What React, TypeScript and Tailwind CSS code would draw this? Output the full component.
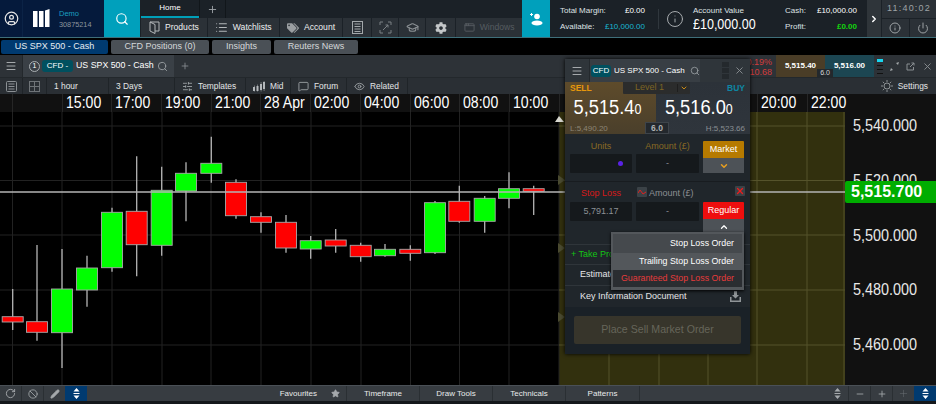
import {
  Ban,
  ChevronDown,
  ChevronRight,
  ChevronUp,
  CircleUser,
  Eye,
  GraduationCap,
  Info,
  List,
  Menu,
  MessageSquare,
  Minus,
  Pencil,
  Plus,
  Power,
  RotateCw,
  Search,
  SlidersHorizontal,
  Star,
  X,
  AppWindow,
} from "lucide-react"
import { FaCog, FaTags } from "react-icons/fa"

// x, wick top, wick bottom, body top, body bottom, up?
const candles: [number, number, number, number, number, boolean][] = [
  [12.7, 289, 330, 316.7, 322, false],
  [37, 245, 340.7, 321.7, 332.3, false],
  [62, 249, 368, 289, 332.7, true],
  [87, 255.7, 306.7, 268, 290, true],
  [112, 207.7, 271.7, 212.3, 267.7, true],
  [136.7, 156.3, 276.3, 211.3, 244.7, false],
  [161.7, 166.7, 255.7, 190.3, 245.3, true],
  [186, 162.3, 221.3, 173.3, 191, true],
  [211.3, 136.7, 182.7, 163.3, 173.3, true],
  [236, 179.3, 218.7, 182.3, 215.7, false],
  [261, 212.3, 232.7, 216.7, 222.3, false],
  [286, 215, 252.7, 222.3, 248, false],
  [310.7, 236, 258.7, 240.7, 249, true],
  [335.7, 229, 252.7, 240, 246, false],
  [360.7, 242.7, 261.7, 245.3, 256.7, false],
  [385, 244, 256.7, 249.3, 255.7, true],
  [410.3, 245.3, 260.7, 249.3, 253.3, false],
  [435, 201, 254, 202.7, 252.7, true],
  [459.3, 185.7, 222.7, 201.3, 221.3, false],
  [484.7, 196, 232.7, 198.3, 221.3, true],
  [509, 172.3, 208.3, 188.7, 198.3, true],
  [533.7, 185.7, 215, 188.7, 191.3, false],
]

const gridX = [12.5, 62, 112, 162, 211, 261, 311, 361, 410.5, 459.5, 509, 559, 609, 659, 708, 757, 807]
const gridY = [126, 180.5, 235, 290, 345]
// the labels between 10:00 and 20:00 sit behind the deal ticket
const timeLabels = ["", "15:00", "17:00", "19:00", "21:00", "28 Apr", "02:00", "04:00", "06:00", "08:00", "10:00", "", "", "", "", "20:00", "22:00"]

function Logo() {
  return (
    <svg width="17" height="19" viewBox="0 0 17 19" fill="#fff">
      <path d="M0 2h4.5v16H0zM6 2h4.5v16H6zM12 1.5l4.5-1.5v18H12z" />
    </svg>
  )
}

function BookIcon() {
  return (
    <svg width="11" height="13" viewBox="0 0 11 13" fill="none" stroke="#b4b8bb" strokeWidth="1">
      <path d="M1 1h9v9M1 1v9l5 2.5V3.5zM6 10h4" />
    </svg>
  )
}

function ExpandIcon() {
  return (
    <svg width="13" height="13" viewBox="0 0 13 13" fill="none" stroke="#7b8084" strokeWidth="1">
      <path d="M1 4V1h3M9 1h3v3M12 9v3H9M4 12H1V9" />
      <path d="M4 9l5-5M6.5 4H9v2.5" />
    </svg>
  )
}

function NewsIcon({ color = "#a3a8ab" }: { color?: string }) {
  return (
    <svg width="11" height="13" viewBox="0 0 11 13" fill="none" stroke={color} strokeWidth="1">
      <rect x="0.5" y="0.5" width="10" height="12" />
      <path d="M2.5 3h6M2.5 5.500h6M2.500 8h6M2.500 10.500h6" />
    </svg>
  )
}

function PanesIcon() {
  return (
    <svg width="11" height="11" viewBox="0 0 11 11" fill="none" stroke="#6f7478" strokeWidth="1">
      <rect x="0.5" y="0.5" width="10" height="10" />
      <path d="M5.500 0.500v10M0.500 5.500h10" />
    </svg>
  )
}

function ListBoxIcon() {
  return (
    <svg width="11" height="11" viewBox="0 0 11 11" fill="none" stroke="#8b9094" strokeWidth="1">
      <rect x="0.5" y="0.5" width="10" height="10" rx="1" />
      <path d="M2.500 3h6M2.500 5.500h6M2.500 8h6" />
    </svg>
  )
}

function CandlesIcon() {
  return (
    <svg width="12" height="11" viewBox="0 0 12 11" fill="#b4b8bb">
      <path d="M0 6h2v4H0zM3.500 5h2v5h-2zM7 3h2v6H7zM10 1h2v7h-2z" />
      <path d="M1 4.500h.5v6H1zM4.300 3.500h.5v7h-.5zM7.800 1h.5v9.500h-.5zM10.800 0h.5v10h-.5z" />
    </svg>
  )
}

function SunGear() {
  return (
    <svg width="12" height="12" viewBox="0 0 12 12" fill="none" stroke="#a5a9ac" strokeWidth="0.8">
      <circle cx="6" cy="6" r="3" />
      <path d="M6 0v2M6 10v2M0 6h2M10 6h2M1.800 1.800l1.400 1.400M8.800 8.800l1.400 1.400M1.800 10.200l1.400-1.400M8.800 3.200l1.400-1.400" />
    </svg>
  )
}

function UpDown({ color = "#fff" }: { color?: string }) {
  return (
    <svg width="9" height="11" viewBox="0 0 9 11" fill={color}>
      <path d="M4.500 0l3 3.500h-6zM4.500 11l-3-3.500h6zM1.500 5h6v1h-6z" />
    </svg>
  )
}

function ExpandSmall() {
  return (
    <svg width="9" height="9" viewBox="0 0 9 9" fill="#a3a7aa">
      <path d="M0 9l1-3 2 2zM9 0l-1 3-2-2z" />
    </svg>
  )
}

function NavItem({ icon, label, w }: { icon: React.ReactNode; label: string; w: string }) {
  return (
    <div className={`${w} flex items-center justify-center gap-[5px] bg-[#2b3137] text-[8.6px] text-[#eef0f1]`}>
      {icon}
      <span>{label}</span>
    </div>
  )
}

function TopBar() {
  return (
    <div className="flex h-[38px] shrink-0 border-b border-[#3f6f7a] bg-[#1b2127]">
      <div className="flex w-[104px] bg-[#051a3c]">
        <div className="flex w-[23px] items-center justify-center border-r border-[#0b2346]">
          <CircleUser size={15} color="#e6e6e6" />
        </div>
        <div className="flex items-center pl-[10px]">
          <Logo />
          <div className="ml-[9px] leading-[11px]">
            <div className="text-[7.5px] text-[#1a9fc0]">Demo</div>
            <div className="text-[7.3px] text-[#8d959d]">30875214</div>
          </div>
        </div>
      </div>
      <div className="flex w-[36px] items-center justify-center bg-[#00a0bc]">
        <Search size={14} color="#fff" />
      </div>
      <div className="flex w-[382px] flex-col">
        <div className="flex h-[18px] pl-px">
          <div className="flex w-[58px] items-center justify-center border-b-2 border-[#009fb8] text-[8px] text-white">Home</div>
          <div className="flex w-[27px] items-center justify-center border-x border-[#11161a]">
            <Plus size={11} color="#9da2a6" />
          </div>
        </div>
        <div className="flex h-[19px] gap-px pl-px">
          <NavItem w="w-[66px]" label="Products" icon={<BookIcon />} />
          <NavItem w="w-[71px]" label="Watchlists" icon={<List size={13} color="#b4b8bb" />} />
          <NavItem w="w-[63px]" label="Account" icon={<FaTags size={12} color="#9a9ea1" />} />
          <div className="flex w-[28px] items-center justify-center bg-[#2b3137]">
            <NewsIcon />
          </div>
          <div className="flex w-[26px] items-center justify-center bg-[#2b3137]">
            <ExpandIcon />
          </div>
          <div className="flex w-[26px] items-center justify-center bg-[#2b3137]">
            <GraduationCap size={13} color="#8b9094" />
          </div>
          <div className="flex w-[29px] items-center justify-center bg-[#2b3137]">
            <FaCog size={12} color="#c4c7c9" />
          </div>
          <div className="flex w-[66px] items-center justify-center gap-[5px] bg-[#2b3137] text-[8.6px] text-[#565c61]">
            <AppWindow size={11} color="#565c61" />
            <span>Windows</span>
          </div>
        </div>
      </div>
      <div className="flex w-[28px] items-center justify-center bg-[#00a0bc]">
        <svg width="14" height="14" viewBox="0 0 14 14" fill="#fff">
          <circle cx="8" cy="4.500" r="2.800" />
          <ellipse cx="8" cy="11" rx="5.500" ry="2.500" />
          <path d="M1 2h3v1H1zM2 1h1v3H2z" />
        </svg>
      </div>
      <div className="flex w-[317px] items-center text-[8px] text-[#dfe2e4]">
        <div className="ml-[10px] w-[85px] leading-[16px]">
          <div className="flex justify-between">
            <span>Total Margin:</span>
            <span className="text-white">£0.00</span>
          </div>
          <div className="flex justify-between">
            <span>Available:</span>
            <span className="text-[#19b7d3]">£10,000.00</span>
          </div>
        </div>
        <div className="ml-[13px] h-[20px] w-px bg-[#30373d]" />
        <Info size={18} color="#a9adb0" className="ml-[7px]" strokeWidth={1.3} />
        <div className="ml-[9px] w-[85px]">
          <div className="leading-[11px]">Account Value</div>
          <div className="origin-left scale-x-[0.87] whitespace-nowrap text-[14.4px] leading-[16px] text-white">£10,000.00</div>
        </div>
        <div className="ml-[7px] w-[72px] leading-[16px]">
          <div className="flex justify-between">
            <span>Cash:</span>
            <span className="text-white">£10,000.00</span>
          </div>
          <div className="flex justify-between">
            <span>Profit:</span>
            <span className="font-bold text-[#14d60e]">£0.00</span>
          </div>
        </div>
      </div>
      <div className="flex w-[14px] items-center justify-center bg-[#2f353a]">
        <ChevronRight size={10} color="#fff" strokeWidth={3.5} />
      </div>
      <div className="ml-px flex w-[54px] flex-col gap-px">
        <div className="flex h-[18px] items-center justify-center bg-[#2b3137] text-[9px] tracking-[1.2px] text-[#9ea3a6]">11:40:02</div>
        <div className="flex h-[18px] gap-px">
          <div className="flex flex-1 items-center justify-center bg-[#2b3137]">
            <Info size={12} color="#9ea3a6" />
          </div>
          <div className="flex flex-1 items-center justify-center bg-[#2b3137]">
            <Power size={12} color="#9ea3a6" />
          </div>
        </div>
      </div>
    </div>
  )
}

function TabsRow() {
  const tabs = [
    { label: "CFD Positions (0)", w: "w-[98px]" },
    { label: "Insights", w: "w-[59px]" },
    { label: "Reuters News", w: "w-[84px]" },
  ]
  return (
    <div className="flex h-[17px] shrink-0 items-center gap-[3px] bg-black pl-px text-[9px]">
      <div className="flex h-[14px] w-[107px] items-center justify-center rounded-[2px] bg-[#003a70] text-[#e8edf2]">US SPX 500 - Cash</div>
      {tabs.map((t) => (
        <div key={t.label} className={`${t.w} flex h-[14px] items-center justify-center rounded-[2px] bg-[#4a5056] text-[#d5d8da]`}>
          {t.label}
        </div>
      ))}
    </div>
  )
}

function ChartHeader() {
  return (
    <div className="relative flex h-[23px] shrink-0 border-b border-[#23282c] bg-[#2d3237] text-[9px] text-white">
      <div className="flex w-[22px] items-center justify-center">
        <Menu size={12} color="#a5a9ac" />
      </div>
      <div className="flex w-[152px] items-center border-l border-[#23282c] bg-[#3a4046] pl-[6px]">
        <div className="flex h-[11px] w-[11px] items-center justify-center rounded-full border border-[#aab0b3] text-[7px]">1</div>
        <div className="ml-[2px] flex h-[12px] w-[31px] items-center justify-center rounded-[3px] bg-[#00505f] text-[8px]">CFD -</div>
        <span className="ml-[3px] whitespace-nowrap text-[8.8px]">US SPX 500 - Cash</span>
        <Search size={11} color="#9aa0a3" className="ml-[3px]" />
      </div>
      <div className="flex w-[22px] items-center justify-center">
        <Plus size={10} color="#8a8f93" />
      </div>
      <div className="ml-auto flex items-stretch">
        <div className="pr-[4px] pt-[2px] text-right text-[9px] leading-[10px] text-[#d23c3c]">
          <div>0.19%</div>
          <div>10.68</div>
        </div>
        <div className="flex w-[49px] items-center justify-center bg-[#4a3d27] text-[8px] font-bold">5,515.40</div>
        <div className="flex w-[49px] items-center justify-center bg-[#1c4652] text-[8px] font-bold">5,516.00</div>
        <div className="ml-[3px] flex w-[6px] flex-col justify-center gap-[3px]">
          <div className="h-[3px] bg-[#19d6f0]" />
          <div className="h-px bg-[#111]" />
          <div className="h-px bg-[#111]" />
          <div className="h-px bg-[#111]" />
        </div>
        <div className="flex w-[53px] items-center justify-around pl-[3px]">
          <ExpandSmall />
          <svg width="9" height="9" viewBox="0 0 9 9" fill="none" stroke="#8a8f93">
            <path d="M7.500 5v3h-6.500v-6h3M4 5l4-4M5.500 1h2.500v2.500" />
          </svg>
          <X size={11} color="#8a8f93" />
        </div>
      </div>
      <div className="absolute right-[103px] bottom-0 flex h-[8px] w-[16px] items-center justify-center bg-[#23282c] text-[7px] text-[#d7d9da]">6.0</div>
    </div>
  )
}

function ToolCell({ w, icon, label }: { w: string; icon?: React.ReactNode; label?: string }) {
  return (
    <div className={`${w} flex items-center gap-[5px] border-r border-[#1f2428] pl-[7px]`}>
      {icon}
      {label && <span>{label}</span>}
    </div>
  )
}

function ChartToolbar() {
  return (
    <div className="flex h-[16px] shrink-0 bg-[#2a2f34] text-[8.4px] text-[#e4e6e7]">
      <div className="flex w-[23px] items-center justify-center border-r border-[#1f2428]">
        <ListBoxIcon />
      </div>
      <div className="flex w-[24px] items-center justify-center border-r border-[#1f2428]">
        <PanesIcon />
      </div>
      <ToolCell w="w-[62px]" label="1 hour" />
      <ToolCell w="w-[66px]" label="3 Days" />
      <ToolCell w="w-[71px]" label="Templates" icon={<SlidersHorizontal size={11} color="#9aa0a3" />} />
      <ToolCell w="w-[45px]" label="Mid" icon={<CandlesIcon />} />
      <ToolCell w="w-[56px]" label="Forum" icon={<MessageSquare size={11} color="#9aa0a3" />} />
      <ToolCell w="w-[61px]" label="Related" icon={<Eye size={11} color="#9aa0a3" />} />
      <div className="ml-auto flex items-center gap-[5px] pr-[8px]">
        <SunGear />
        <span>Settings</span>
      </div>
    </div>
  )
}

function TimeAxis() {
  return (
    <div className="flex h-[18px] shrink-0 bg-[#111] pl-[12px] text-[16px] text-white">
      {timeLabels.map((t, i) => (
        <div key={i} className="flex w-[49.7px] shrink-0 items-center overflow-hidden whitespace-nowrap border-l border-[#262626] pl-[3px] leading-none">
          <span className="origin-left scale-x-[0.88]">{t}</span>
        </div>
      ))}
    </div>
  )
}

function Chart() {
  return (
    <svg width="845" height="273" viewBox="0 112 845 273" className="block shrink-0">
      <rect x="0" y="112" width="845" height="273" fill="#000" />
      <rect x="559" y="112" width="286" height="273" fill="#32300e" />
      {gridX.map((x) => (
        <line key={x} x1={x} x2={x} y1="112" y2="385" stroke={x > 559 ? "#55532b" : "#222"} strokeWidth="1" />
      ))}
      {gridY.map((y) => (
        <g key={y}>
          <line x1="0" x2="559" y1={y} y2={y} stroke="#222" />
          <line x1="559" x2="845" y1={y} y2={y} stroke="#55532b" />
        </g>
      ))}
      <line x1="844" x2="844" y1="112" y2="385" stroke="#55532b" />
      {candles.map(([x, wt, wb, bt, bb, up]) => (
        <g key={x}>
          <line x1={x} x2={x} y1={wt} y2={wb} stroke="#b5b5b5" strokeWidth="1.3" />
          <rect x={x - 10.5} y={bt} width="21" height={bb - bt} fill={up ? "#00ff00" : "#ff0000"} stroke="#a8a8a8" strokeWidth="0.9" />
        </g>
      ))}
      <line x1="0" x2="845" y1="192" y2="192" stroke="#b4b4b4" strokeWidth="1.3" />
      <path d="M555 122l4-6 5 6z" fill="#d8d8d0" />
      {[180, 248, 317].map((y) => (
        <path key={y} d={`M558 ${y - 5}l7 5-7 5z`} fill="#4a4a30" />
      ))}
    </svg>
  )
}

function PriceAxis() {
  const prices = ["5,540.000", "5,520.000", "5,500.000", "5,480.000", "5,460.000"]
  return (
    <div className="flex w-[91px] flex-col gap-[34.75px] bg-[#111] pl-[8px] pt-[4px] text-[16px] leading-[20px] text-[#e8e8e8]">
      {prices.map((p) => (
        <div key={p} className="origin-left scale-x-[0.9] whitespace-nowrap">
          {p}
        </div>
      ))}
    </div>
  )
}

function FieldBox({ w, children }: { w: string; children?: React.ReactNode }) {
  return <div className={`${w} relative flex h-[19px] items-center justify-center rounded-[1px] bg-[#15191c] text-[9px] text-[#8c9094]`}>{children}</div>
}

function DealTicket() {
  return (
    <div className="absolute left-[565px] top-[59px] flex h-[295px] w-[185px] flex-col bg-[#20262b] text-[9px] text-[#e6e8e9] shadow-[0_0_4px_#000]">
      <div className="flex h-[23px] shrink-0 bg-[#2f353a]">
        <div className="flex w-[25px] items-center justify-center border-r border-[#24292d]">
          <Menu size={12} color="#a5a9ac" />
        </div>
        <div className="flex w-[110px] items-center bg-[#383e44] pl-[1px]">
          <div className="flex h-[12px] w-[20px] items-center justify-center rounded-[3px] bg-[#00505f] text-[8px] text-white">CFD</div>
          <span className="ml-[3px] whitespace-nowrap text-[8px] text-white">US SPX 500 - Cash</span>
          <Search size={10} color="#9aa0a3" className="ml-[5px] shrink-0" />
        </div>
        <div className="ml-[22px] flex w-[7px] flex-col justify-center gap-[1px]">
          <div className="h-[5px] bg-[#24292d]" />
          <div className="h-[5px] bg-[#24292d]" />
          <div className="h-[5px] bg-[#24292d]" />
        </div>
        <div className="flex flex-1 items-center justify-center">
          <X size={11} color="#8a8f93" />
        </div>
      </div>

      <div className="relative flex h-[52px] shrink-0">
        <div className="w-[91px] bg-[linear-gradient(180deg,#5e4b2b,#4a3f2b)] pl-[5px] pt-px">
          <div className="text-[8.5px] font-bold leading-[10px] text-[#e8980c]">SELL</div>
          <div className="mt-[3px] origin-left scale-x-[0.89] whitespace-nowrap pl-[4px] text-[20.5px] leading-[22px] text-white">
            5,515.4<span className="text-[14px]">0</span>
          </div>
          <div className="mt-[4px] text-[8px] leading-[9px] text-[#8c8575]">L:5,490.20</div>
        </div>
        <div className="flex-1 bg-[linear-gradient(180deg,#2c3239,#2f353c)] pt-px">
          <div className="pr-[5px] text-right text-[8.5px] font-bold leading-[10px] text-[#0e86a3]">BUY</div>
          <div className="mt-[3px] origin-left scale-x-[0.89] whitespace-nowrap pl-[10px] text-[20.5px] leading-[22px] text-white">
            5,516.0<span className="text-[14px]">0</span>
          </div>
          <div className="mt-[4px] pr-[5px] text-right text-[8px] leading-[9px] text-[#8a8f93]">H:5,523.66</div>
        </div>
        <div className="absolute left-[58px] top-0 flex h-[12px] w-[67px] items-center rounded-b-[1px] bg-[#2b2c2c] text-[9px] text-[#7d6424]">
          <span className="flex-1 pl-[12px]">Level 1</span>
          <div className="flex w-[13px] items-center justify-center border-l border-[#1e1e1e]">
            <ChevronDown size={8} color="#c98a14" strokeWidth={3} />
          </div>
        </div>
        <div className="absolute bottom-0 left-[80px] flex h-[12px] w-[24px] items-center justify-center border border-[#3e444a] bg-[#23282d] text-[8.5px] font-bold text-[#aeb2b4]">6.0</div>
      </div>

      <div className="flex h-[48px] shrink-0 gap-[4px] border-b border-[#181c20] px-[5px] pt-[7px]">
        <div className="w-[62px]">
          <div className="h-[13px] text-center leading-[10px] text-[#8a6a24]">Units</div>
          <FieldBox w="w-[62px]">
            <div className="absolute right-[9px] h-[5px] w-[5px] rounded-full bg-[#5a22e6]" />
          </FieldBox>
        </div>
        <div className="w-[63px]">
          <div className="h-[13px] text-center leading-[10px] text-[#8a6a24]">Amount (£)</div>
          <FieldBox w="w-[63px]">-</FieldBox>
        </div>
        <div className="w-[41px]">
          <div className="flex h-[17px] items-center justify-center rounded-t-[1px] bg-[#b67a00] text-white">Market</div>
          <div className="flex h-[15px] items-center justify-center bg-[#4d5257]">
            <ChevronDown size={10} color="#e8a020" strokeWidth={3.5} />
          </div>
        </div>
      </div>

      <div className="relative flex h-[62px] shrink-0 gap-[4px] px-[5px] pt-[5px]">
        <div className="w-[62px]">
          <div className="h-[15px] text-center leading-[12px] text-[#d91a1a]">Stop Loss</div>
          <FieldBox w="w-[62px]">5,791.17</FieldBox>
        </div>
        <div className="w-[63px]">
          <div className="flex h-[15px] items-start gap-[2px] pl-px leading-[12px] text-[#8c9094]">
            <div className="flex h-[10px] w-[10px] items-center justify-center rounded-[1px] bg-[#3b4247]">
              <svg width="8" height="6" viewBox="0 0 8 6" fill="none" stroke="#e02020">
                <path d="M0 4l2-3 3 4 3-2" />
              </svg>
            </div>
            <span className="whitespace-nowrap">Amount (£)</span>
          </div>
          <FieldBox w="w-[63px]">-</FieldBox>
        </div>
        <div className="mt-[15px] w-[41px]">
          <div className="flex h-[17px] items-center justify-center rounded-t-[1px] bg-[#ee0e0e] text-white">Regular</div>
          <div className="flex h-[16px] items-center justify-center bg-[#4d5257]">
            <ChevronUp size={10} color="#fff" strokeWidth={3} />
          </div>
        </div>
        <div className="absolute right-[5px] top-[4px] flex h-[10px] w-[10px] items-center justify-center rounded-[1px] bg-[#3b4247]">
          <X size={10} color="#ee1c1c" strokeWidth={3} />
        </div>
      </div>

      <div className="flex h-[21px] shrink-0 items-center border-y border-[#2f353a] pl-[6px] text-[#14c514]">+ Take Profit / Limit</div>
      <div className="flex h-[21px] shrink-0 items-center border-b border-[#2f353a] pl-[15px]">Estimated Margin</div>
      <div className="flex h-[21px] shrink-0 items-center justify-between pl-[15px] pr-[9px]">
        <span>Key Information Document</span>
        <svg width="11" height="11" viewBox="0 0 11 11" fill="#8f9497">
          <path d="M4 0h3v4h2l-3.500 3.500L2 4h2zM0 6h1.500v3.500h8V6H11v5H0z" />
        </svg>
      </div>
      <div className="flex flex-1 items-start bg-[#1a2127] px-[9px] pt-[9px]">
        <div className="flex h-[28px] w-[167px] items-center justify-center rounded-[2px] bg-[#37352b] text-[10.6px] text-[#66655a]">Place Sell Market Order</div>
      </div>

      <div className="absolute left-[46px] top-[173px] flex h-[58px] w-[133px] flex-col bg-[#53575b] p-[2px] text-right text-[8.8px] shadow-[0_1px_3px_#000]">
        <div className="flex h-[19px] items-center justify-end bg-[#45494d] pr-[8px] text-white">Stop Loss Order</div>
        <div className="flex h-[17px] items-center justify-end pr-[8px] text-white">Trailing Stop Loss Order</div>
        <div className="flex h-[17px] items-center justify-end bg-[#2a2d31] pr-[8px] text-[#e63b3b]">Guaranteed Stop Loss Order</div>
      </div>
    </div>
  )
}

function BottomBar() {
  return (
    <div className="flex h-[16px] shrink-0 border-t border-[#4a5056] bg-[#373c41] text-[8px] text-[#e8eaeb]">
      <div className="flex w-[22px] items-center justify-center border-r border-[#2a2f33]">
        <RotateCw size={11} color="#a5a9ac" />
      </div>
      <div className="flex w-[22px] items-center justify-center border-r border-[#2a2f33]">
        <Ban size={10} color="#a5a9ac" />
      </div>
      <div className="flex w-[21px] items-center justify-center">
        <Pencil size={10} color="#a5a9ac" fill="#a5a9ac" />
      </div>
      <div className="flex w-[22px] items-center justify-center bg-[#003a70]">
        <UpDown />
      </div>
      <div className="flex w-[260px] items-center justify-end border-r border-[#2a2f33]">
        <span>Favourites</span>
        <Star size={9} color="#a5a9ac" fill="#a5a9ac" className="ml-[14px] mr-[6px]" />
      </div>
      <div className="flex w-[73px] items-center justify-center border-r border-[#2a2f33]">Timeframe</div>
      <div className="flex w-[73px] items-center justify-center border-r border-[#2a2f33]">Draw Tools</div>
      <div className="flex w-[73px] items-center justify-center border-r border-[#2a2f33]">Technicals</div>
      <div className="flex w-[74px] items-center justify-center border-r border-[#2a2f33]">Patterns</div>
      <div className="ml-auto flex">
        <div className="flex w-[22px] items-center justify-center">
          <UpDown color="#a5a9ac" />
        </div>
        <div className="flex w-[22px] items-center justify-center border-l border-[#2a2f33]">
          <Minus size={10} color="#a5a9ac" />
        </div>
        <div className="flex w-[22px] items-center justify-center border-l border-[#2a2f33]">
          <Plus size={10} color="#a5a9ac" />
        </div>
        <div className="flex w-[22px] items-center justify-center border-l border-[#2a2f33]">
          <Plus size={11} color="#6f7478" strokeWidth={1} />
        </div>
        <div className="flex w-[22px] items-center justify-center bg-[#003a70]">
          <UpDown />
        </div>
      </div>
    </div>
  )
}

export default function App() {
  return (
    <div className="relative flex h-[404px] w-[936px] flex-col overflow-hidden bg-[#14181b] font-['Liberation_Sans',Arial,sans-serif]">
      <TopBar />
      <TabsRow />
      <ChartHeader />
      <ChartToolbar />
      <TimeAxis />
      <div className="relative flex h-[273px] shrink-0">
        <Chart />
        <PriceAxis />
        <div className="absolute left-[845px] top-[69px] flex h-[22px] w-[91px] items-center rounded-l-[2px] bg-[#00ad00] pl-[6px] text-[16px] font-bold text-white">5,515.700</div>
      </div>
      <BottomBar />
      <DealTicket />
    </div>
  )
}
